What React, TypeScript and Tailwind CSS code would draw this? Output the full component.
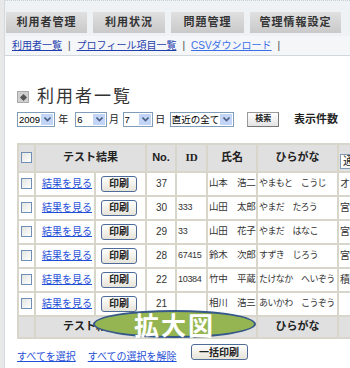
import React from 'react';

const rows = [
  { no: '37', id: '', name: '山本　浩二', kana: 'やまもと　こうじ', extra: 'オ' },
  { no: '30', id: '333', name: '山田　太郎', kana: 'やまだ　たろう', extra: '宮' },
  { no: '29', id: '33', name: '山田　花子', kana: 'やまだ　はなこ', extra: '宮' },
  { no: '28', id: '67415', name: '鈴木　次郎', kana: 'すずき　じろう', extra: '宮' },
  { no: '22', id: '10384', name: '竹中　平蔵', kana: 'たけなか　へいぞう', extra: '積' },
  { no: '21', id: '', name: '相川　浩三', kana: 'あいかわ　こうぞう', extra: '' },
];

const tabs = [
  { label: '利用者管理', w: 'w-[81px]' },
  { label: '利用状況', w: 'w-[72px]' },
  { label: '問題管理', w: 'w-[73px]' },
  { label: '管理情報設定', w: 'w-[91px]' },
];

const Check = () => (
  <div className="w-[11px] h-[11px] border border-[#6f8fb5] bg-gradient-to-br from-[#e4e4e0] to-white mx-auto" />
);

const Select = ({ value, w }: { value: string; w: string }) => (
  <div className={`${w} h-[15px] flex items-stretch border border-[#7f9db9] bg-white`}>
    <span className="flex-1 pl-[1px] text-[9.5px] leading-[13px] text-black whitespace-nowrap overflow-hidden">{value}</span>
    <span className="w-[12px] m-[1px] bg-[#c3d5f7] flex items-center justify-center">
      <svg width="7" height="5" viewBox="0 0 7 5">
        <path d="M0.5 0.5 L3.5 3.5 L6.5 0.5" stroke="#4d6185" strokeWidth="1.6" fill="none" />
      </svg>
    </span>
  </div>
);

const PrintBtn = ({ label, w }: { label: string; w: string }) => (
  <div className={`${w} h-[16px] border border-[#4f6c98] rounded-[3px] bg-gradient-to-b from-white to-[#e6e3d8] flex items-center justify-center text-[10px] font-bold text-[#222]`}>
    {label}
  </div>
);

const cell = 'border-2 border-[#d8d5ca]';
const head = 'border-2 border-[#d8d5ca] bg-[#e0e0e0] font-bold text-[11px] text-[#222] text-center';

export default function App() {
  return (
    <div
      className="w-[350px] h-[368px] overflow-hidden flex bg-white relative"
      style={{ fontFamily: '"Liberation Sans", "Noto Sans CJK JP", sans-serif' }}
    >
      <div className="w-[5px] shrink-0 bg-[#e8e8e8] border-r border-[#d3d9de]" />
      <div className="flex-1 flex flex-col min-w-0">
        <div className="bg-[#eef2f5] border-t border-dotted border-[#c3d0d8] pt-[11px]">
          <div className="flex gap-[6px] pl-[1px]">
            {tabs.map((t) => (
              <div
                key={t.label}
                className={`${t.w} h-[21px] bg-gradient-to-b from-[#e0e0e0] to-[#c9c9c9] flex items-center justify-center text-[11px] font-bold text-[#333] tracking-[1px]`}
              >
                {t.label}
              </div>
            ))}
          </div>
          <div className="mt-[3px] h-[20px] bg-[#f4f6f8] border-b border-[#d0d7dd] flex items-center pl-[7px] text-[10px] gap-[6px]">
            <a className="text-[#1f3fae] underline">利用者一覧</a>
            <span className="text-[#444]">|</span>
            <a className="text-[#1f3fae] underline">プロフィール項目一覧</a>
            <span className="text-[#444]">|</span>
            <a className="text-[#3b6fe8] underline">CSVダウンロード</a>
            <span className="text-[#444]">|</span>
          </div>
        </div>

        <div className="px-[12px] flex flex-col">
          <div className="mt-[31px] h-[20px] flex items-center gap-[8px]">
            <div className="w-[12px] h-[12px] bg-[#cfcfcf] border border-[#aaa] flex items-center justify-center">
              <div className="w-[5px] h-[5px] bg-[#555] rotate-45" />
            </div>
            <span className="text-[17px] text-[#333] tracking-[2px]">利用者一覧</span>
          </div>

          <div className="mt-[4px] flex items-center text-[10px] text-[#222]">
            <Select value="2009" w="w-[40px]" />
            <span className="ml-[3px] w-[19px]">年</span>
            <Select value="6" w="w-[35px]" />
            <span className="ml-[2px] w-[15px]">月</span>
            <Select value="7" w="w-[34px]" />
            <span className="ml-[2px] w-[16px]">日</span>
            <Select value="直近の全て" w="w-[67px]" />
            <div className="ml-[13px] w-[35px] h-[15px] border border-[#9a9a9a] border-r-[#777] border-b-[#777] bg-gradient-to-b from-white to-[#e4e4e4] flex items-center justify-center text-[8px] font-bold">
              検索
            </div>
            <span className="ml-[15px] font-bold text-[11px] whitespace-nowrap">表示件数</span>
          </div>

          <table className="mt-[15px] table-fixed border-collapse w-[420px] text-[10px] text-[#333] border-2 border-[#c8c4b6]">
            <colgroup>
              <col className="w-[17px]" />
              <col className="w-[60px]" />
              <col className="w-[51px]" />
              <col className="w-[30px]" />
              <col className="w-[31px]" />
              <col className="w-[50px]" />
              <col className="w-[81px]" />
              <col className="w-[100px]" />
            </colgroup>
            <thead>
              <tr className="h-[28px]">
                <th className={head}><Check /></th>
                <th className={head} colSpan={2}>テスト結果</th>
                <th className={head}>No.</th>
                <th className={head} style={{ fontFamily: '"Liberation Serif", serif' }}>ID</th>
                <th className={head}>氏名</th>
                <th className={head}>ひらがな</th>
                <th className={`${head} align-bottom text-left`}>
                  <div className="ml-[1px] mb-[2px] h-[15px] w-[40px] border border-[#7f9db9] bg-white font-normal pl-[2px] leading-[13px]">通</div>
                </th>
              </tr>
            </thead>
            <tbody>
              {rows.map((r) => (
                <tr key={r.no} className="h-[24px]">
                  <td className={cell}><Check /></td>
                  <td className={`${cell} pl-[6px]`}>
                    <a className="text-[#1f4fd6] underline text-[10px]">結果を見る</a>
                  </td>
                  <td className={`${cell} pl-[5px]`}>
                    <PrintBtn label="印刷" w="w-[36px]" />
                  </td>
                  <td className={`${cell} pl-[9px]`}>{r.no}</td>
                  <td className={`${cell} pl-[1px] text-[9px] tracking-[-0.3px]`}>{r.id}</td>
                  <td className={`${cell} pl-[1px] whitespace-nowrap overflow-hidden text-[9.5px] tracking-[-0.2px]`}>{r.name}</td>
                  <td className={`${cell} pl-[1px] whitespace-nowrap overflow-hidden text-[9px] tracking-[-0.6px]`}>{r.kana}</td>
                  <td className={`${cell} pl-[1px]`}>{r.extra}</td>
                </tr>
              ))}
              <tr className="h-[22px]">
                <td className={head}></td>
                <td className={head} colSpan={2}>テスト結果</td>
                <td className={head}>No.</td>
                <td className={head}>ID</td>
                <td className={head}>氏名</td>
                <td className={head}>ひらがな</td>
                <td className={head}></td>
              </tr>
            </tbody>
          </table>

          <div className="mt-[2px] flex items-center text-[10px]">
            <a className="text-[#1f4fd6] underline mt-[8px]">すべてを選択</a>
            <a className="ml-[12px] text-[#1f4fd6] underline mt-[8px]">すべての選択を解除</a>
            <div className="ml-[14px]">
              <PrintBtn label="一括印刷" w="w-[57px]" />
            </div>
          </div>
        </div>
      </div>

      <div className="absolute left-[93px] top-[310px] w-[163px] h-[28px] rounded-[50%] bg-[#94b552] border-2 border-[#36598a] flex items-center justify-center">
        <span className="text-white font-bold text-[25px] leading-none tracking-[2px]" style={{ fontFamily: '"Noto Sans CJK JP", sans-serif' }}>
          拡大図
        </span>
      </div>
    </div>
  );
}
